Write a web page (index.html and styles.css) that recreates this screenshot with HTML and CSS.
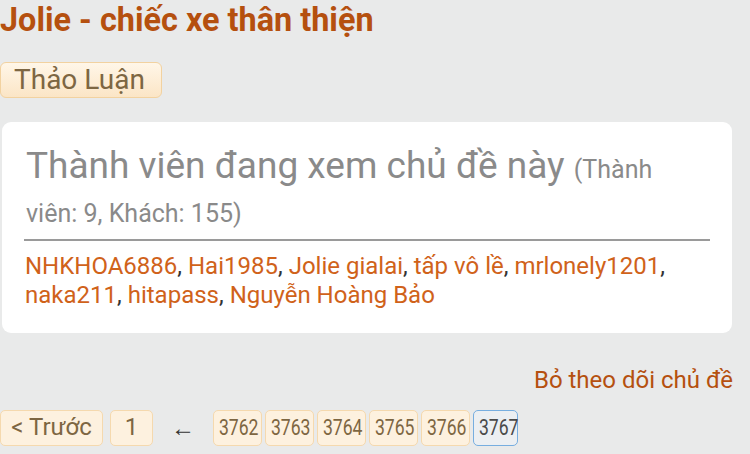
FILE: index.html
```html
<!DOCTYPE html>
<html lang="vi">
<head>
<meta charset="utf-8">
<title>Jolie - chiếc xe thân thiện</title>
<link rel="stylesheet" href="styles.css">
</head>
<body>
<div class="page">
  <h1 class="title">Jolie - chiếc xe thân thiện</h1>
  <div class="crumbs"><a class="crumb">Thảo Luận</a></div>
  <section class="card">
    <h2 class="card-head">Thành viên đang xem chủ đề này <span class="count">(Thành viên: 9, Khách: 155)</span></h2>
    <div class="names"><a>NHKHOA6886</a>, <a>Hai1985</a>, <a>Jolie gialai</a>, <a>tấp vô lề</a>, <a>mrlonely1201</a>, <a>naka211</a>, <a>hitapass</a>, <a>Nguyễn Hoàng Bảo</a></div>
  </section>
  <div class="actions"><a class="unwatch">Bỏ theo dõi chủ đề</a></div>
  <nav class="pager">
    <a class="pbtn prev">&lt; Trước</a>
    <a class="pbtn first">1</a>
    <span class="arrow">←</span>
    <a class="pnum"><span>3762</span></a>
    <a class="pnum"><span>3763</span></a>
    <a class="pnum"><span>3764</span></a>
    <a class="pnum"><span>3765</span></a>
    <a class="pnum"><span>3766</span></a>
    <a class="pnum current"><span>3767</span></a>
  </nav>
</div>
</body>
</html>
```

FILE: styles.css
```css
html, body {
  margin: 0;
  padding: 0;
  background: #e9eaea;
  font-family: Roboto, "Noto Sans", sans-serif;
}
.page {
  width: 750px;
  height: 454px;
  overflow: hidden;
}
.title {
  margin: 0;
  padding: 0;
  font-size: 32.4px;
  line-height: 40px;
  font-weight: 700;
  color: #b5500f;
  white-space: nowrap;
}
.crumbs {
  margin-top: 22px;
  display: flex;
}
.crumb {
  display: block;
  height: 36px;
  width: 162px;
  box-sizing: border-box;
  padding: 0 0 0 13px;
  font-size: 28px;
  line-height: 33px;
  color: #7d6642;
  background: linear-gradient(#fff6e8, #fbe5c6);
  border: 1.5px solid #f2d2a0;
  border-radius: 6px;
}
.card {
  margin: 24px 18px 0 2px;
  background: #fff;
  border-radius: 9px;
  padding: 22px 22px 0 22px;
  height: 211px;
  box-sizing: border-box;
}
.card-head {
  margin: 0;
  padding: 0 10px 7px 2px;
  font-weight: 400;
  font-size: 37px;
  line-height: 44px;
  color: #8a8a8a;
  border-bottom: 2px solid #9a9a9a;
}
.count {
  font-size: 25px;
  line-height: 20px;
}
.names {
  margin-top: 11px;
  padding-left: 1px;
  font-size: 24px;
  line-height: 29px;
  color: #333;
}
.names a {
  color: #d0621a;
}
.actions {
  display: flex;
  justify-content: flex-end;
  padding: 32px 17px 0 0;
}
.unwatch {
  font-size: 24px;
  line-height: 30px;
  color: #b5500f;
}
.pager {
  display: flex;
  align-items: center;
  margin-top: 15px;
}
.pbtn, .pnum {
  display: block;
  box-sizing: border-box;
  height: 36px;
  line-height: 33px;
  text-align: center;
  color: #7d6642;
  background: #fdf1df;
  border: 1.5px solid #f5d9ae;
  border-radius: 5px;
  white-space: nowrap;
}
.pbtn {
  font-size: 24px;
}
.prev { width: 103px; }
.first { width: 43px; margin-left: 7px; }
.arrow {
  width: 60px;
  text-align: center;
  font-size: 24px;
  color: #333;
}
.pnum {
  width: 49px;
  font-size: 22px;
  margin-right: 3px;
}
.pnum span {
  display: inline-block;
  transform: scaleX(0.8);
}
.pnum.current {
  width: 45px;
  background: #eceff2;
  border-color: #77aee0;
  color: #4a4a4a;
}
```
